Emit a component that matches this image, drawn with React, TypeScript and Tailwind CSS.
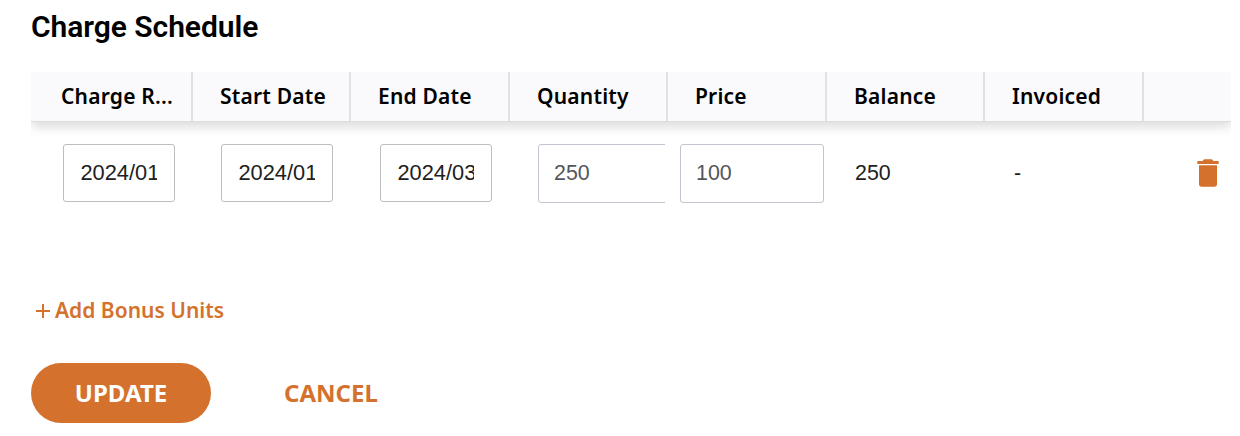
import React from 'react';

interface ChargeRow {
  releaseDate: string;
  startDate: string;
  endDate: string;
  quantity: string;
  price: string;
  balance: string;
  invoiced: string;
}

const columns = ['Charge Release Date', 'Start Date', 'End Date', 'Quantity', 'Price', 'Balance', 'Invoiced', ''];

const row: ChargeRow = {
  releaseDate: '2024/01/01',
  startDate: '2024/01/01',
  endDate: '2024/03/31',
  quantity: '250',
  price: '100',
  balance: '250',
  invoiced: '-',
};

const gridCols = 'grid grid-cols-[162px_158px_159px_158px_159px_158px_159px_87px]';

const DateInput: React.FC<{ label: string; value: string }> = ({ label, value }) => (
  <input
    aria-label={label}
    defaultValue={value}
    className="block w-28 h-[58px] pl-[16.500px] pr-[17px] bg-white border border-[#bdbdbd] rounded-[3px] text-[21.800px] text-[#212121] outline-none"
  />
);

const NumberInput: React.FC<{ label: string; value: string }> = ({ label, value }) => (
  <input
    aria-label={label}
    defaultValue={value}
    className="block w-36 h-[59px] shrink-0 px-[15px] pb-[1px] bg-white border border-[#c4c3d0] rounded-[3px] text-[#55565a] outline-none"
  />
);

const TrashIcon = () => (
  <svg width="22" height="28" viewBox="0 0 22 28" fill="#d4722d">
    <path d="M7 0.300h8l1.500 1.700H21.700v3H0.300V2h5.200z" />
    <path d="M2 6.300h18V25a2.700 2.700 0 0 1-2.700 2.700H4.700A2.700 2.700 0 0 1 2 25z" />
  </svg>
);

const PlusIcon = () => (
  <svg width="14" height="14" viewBox="0 0 14 14" fill="#d4722d">
    <path d="M6 0h2v6h6v2H8v6H6V8H0V6h6z" />
  </svg>
);

export default function App() {
  return (
    <div className="w-[1240px] h-[436px] pl-[31px] pt-2 overflow-hidden bg-white">
      <h1 className="h-16 font-['Roboto',sans-serif] font-semibold text-[30px] leading-[38px] tracking-[-0.05px] text-black">
        Charge Schedule
      </h1>

      {/* Column headings */}
      <div className="w-[1200px] overflow-hidden h-[66px]">
        <div className={`${gridCols} h-[50px] bg-[#fafafc] rounded-t border-b border-[#dddde0] shadow-[0_5px_11px_rgba(0,0,0,0.14)]`}>
          {columns.map((name, index) => (
            <div
              key={index}
              className={`flex items-center pr-4 pb-[2px] ${index === 0 ? 'pl-[30px]' : 'pl-[27px]'} ${
                index < columns.length - 1 ? 'border-r-2 border-[#e0e0e8]' : ''
              }`}
            >
              <span className="truncate font-['Noto_Sans',sans-serif] font-semibold text-[21px] leading-[30px] tracking-[0.2px] text-black">
                {index === 0 ? 'Charge R...' : name}
              </span>
            </div>
          ))}
        </div>
      </div>

      {/* Charge row */}
      <div className={`${gridCols} w-[1200px] h-[70px] pt-[6px] font-['Liberation_Sans',Arial,sans-serif] text-[21.4px] text-[#212121]`}>
        <div className="pl-8">
          <DateInput label="Charge release date" value={row.releaseDate} />
        </div>
        <div className="pl-7">
          <DateInput label="Start date" value={row.startDate} />
        </div>
        <div className="pl-[29px]">
          <DateInput label="End date" value={row.endDate} />
        </div>
        <div className="pl-7">
          <div className="w-[127px] overflow-hidden">
            <NumberInput label="Quantity" value={row.quantity} />
          </div>
        </div>
        <div className="pl-3">
          <NumberInput label="Price" value={row.price} />
        </div>
        <div className="pl-7 h-[58px] flex items-center">{row.balance}</div>
        <div className="pl-[29px] h-[58px] flex items-center">{row.invoiced}</div>
        <button aria-label="Delete charge" className="pl-[53px] h-[58px] flex items-center">
          <TrashIcon />
        </button>
      </div>

      <button className="mt-[87px] ml-[5px] h-8 flex items-center gap-[5px] font-['Noto_Sans',sans-serif] font-semibold text-[21px] text-[#d4722d]">
        <PlusIcon />
        Add Bonus Units
      </button>

      {/* Form actions */}
      <div className="mt-9 flex items-center font-['Noto_Sans',sans-serif] font-bold text-2xl">
        <button className="w-[180px] h-[60px] rounded-full bg-[#d4722d] text-white">UPDATE</button>
        <button className="ml-[73px] h-[60px] text-[#d4722d]">CANCEL</button>
      </div>
    </div>
  );
}
